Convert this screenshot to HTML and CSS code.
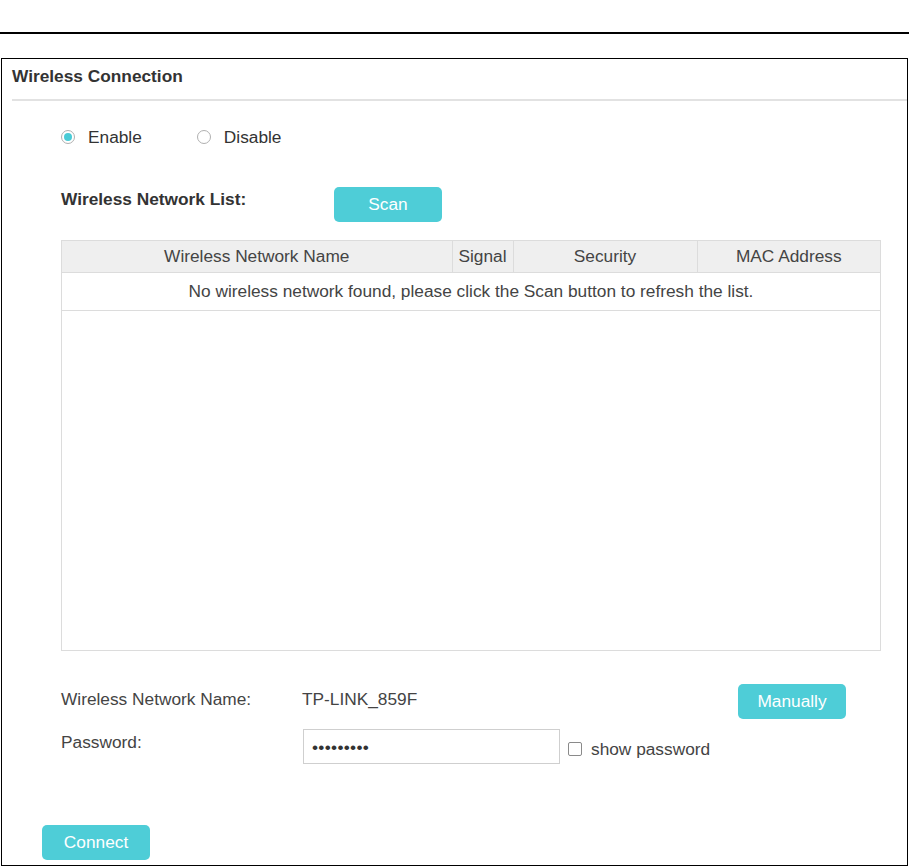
FILE: index.html
```html
<!DOCTYPE html>
<html lang="en">
<head>
<meta charset="utf-8">
<title>Wireless Connection</title>
<link rel="stylesheet" href="styles.css">
</head>
<body>
<div class="rule"></div>
<div class="panel">
  <div class="panel-title">Wireless Connection</div>
  <div class="divider"></div>
  <div class="content">
    <div class="radio-row">
      <label class="radio"><span class="radio-dot checked"></span>Enable</label>
      <label class="radio"><span class="radio-dot"></span>Disable</label>
    </div>
    <div class="list-row">
      <span class="list-label">Wireless Network List:</span>
      <button class="btn" type="button">Scan</button>
    </div>
    <div class="net-table">
      <table>
        <thead>
          <tr>
            <th class="col-name">Wireless Network Name</th>
            <th class="col-signal">Signal</th>
            <th class="col-sec">Security</th>
            <th class="col-mac">MAC Address</th>
          </tr>
        </thead>
        <tbody>
          <tr>
            <td colspan="4">No wireless network found, please click the Scan button to refresh the list.</td>
          </tr>
        </tbody>
      </table>
    </div>
    <div class="form-row row-name">
      <span class="form-label">Wireless Network Name:</span>
      <span class="form-value">TP-LINK_859F</span>
      <button class="btn" type="button">Manually</button>
    </div>
    <div class="form-row row-pass">
      <span class="form-label">Password:</span>
      <div class="pass-field">
        <input class="pass-input" type="password" value="123456789">
        <label class="check"><span class="check-box"></span>show password</label>
      </div>
    </div>
  </div>
  <div class="footer">
    <button class="btn" type="button">Connect</button>
  </div>
</div>
</body>
</html>
```

FILE: styles.css
```css
* { box-sizing: border-box; }

body {
  margin: 0;
  background: #fff;
  font-family: "Liberation Sans", Arial, sans-serif;
  font-size: 17.3px;
  color: #333;
}

.rule {
  margin-top: 32px;
  height: 2px;
  background: #000;
}

.panel {
  margin-top: 24px;
  margin-left: 1px;
  width: 907px;
  height: 808px;
  border: 1px solid #000;
}

.panel-title {
  padding: 7px 0 0 10px;
  line-height: 20px;
  font-weight: bold;
  color: #333;
}

.divider {
  margin: 13px 0 0 10px;
  height: 2px;
  background: #e2e2e2;
}

.content {
  padding-left: 59px;
}

.radio-row {
  margin-top: 26px;
  display: flex;
  align-items: center;
  gap: 55px;
  line-height: 20px;
}

.radio {
  display: flex;
  align-items: center;
  gap: 13px;
}

.radio-dot {
  width: 14px;
  height: 14px;
  border: 1px solid #b0b0b0;
  border-radius: 50%;
  display: flex;
  align-items: center;
  justify-content: center;
}

.radio-dot.checked::after {
  content: "";
  width: 8px;
  height: 8px;
  border-radius: 50%;
  background: #4acbd6;
}

.list-row {
  margin-top: 40px;
  display: flex;
  align-items: flex-start;
}

.list-label {
  width: 273px;
  margin-top: 2px;
  line-height: 20px;
  font-weight: bold;
}

.btn {
  width: 108px;
  height: 35px;
  border: none;
  border-radius: 5px;
  background: #4ecdd7;
  color: #fff;
  font-family: "Liberation Sans", Arial, sans-serif;
  font-size: 17.3px;
  padding: 0;
}

.net-table {
  margin-top: 18px;
  width: 820px;
  height: 411px;
  border: 1px solid #dcdcdc;
}

.net-table table {
  width: 100%;
  border-collapse: collapse;
  table-layout: fixed;
}

.net-table th {
  height: 31px;
  padding: 0;
  background: #efefef;
  font-weight: normal;
  color: #444;
  text-align: center;
  border-bottom: 1px solid #dcdcdc;
  border-left: 1px solid #dcdcdc;
}

.net-table th:first-child { border-left: none; }

.col-name { width: 390px; }
.col-signal { width: 61px; }
.col-sec { width: 184px; }

.net-table td {
  height: 38px;
  padding: 0;
  text-align: center;
  color: #444;
  border-bottom: 1px solid #dcdcdc;
}

.form-row {
  display: flex;
  align-items: flex-start;
  line-height: 20px;
}

.form-label {
  width: 241px;
  color: #444;
}

.row-name {
  margin-top: 33px;
}

.row-name .form-label,
.row-name .form-value {
  margin-top: 5px;
}

.form-value {
  width: 436px;
  color: #444;
}

.row-pass {
  margin-top: 10px;
}

.row-pass .form-label {
  margin-top: 3px;
}

.pass-field {
  display: flex;
  align-items: center;
  margin-left: 1px;
}

.pass-input {
  width: 257px;
  height: 35px;
  border: 1px solid #cfcfcf;
  padding: 2px 8px 0;
  font-family: "Liberation Sans", Arial, sans-serif;
  font-size: 17.3px;
  color: #333;
  outline: none;
  letter-spacing: 0.3px;
}

.check {
  display: flex;
  align-items: center;
  gap: 9px;
  margin-left: 8px;
  margin-top: 4px;
  color: #444;
}

.check-box {
  width: 14px;
  height: 14px;
  border: 1px solid #8a8a8a;
  border-radius: 2px;
}

.footer {
  margin-top: 61px;
  padding-left: 40px;
}
```
